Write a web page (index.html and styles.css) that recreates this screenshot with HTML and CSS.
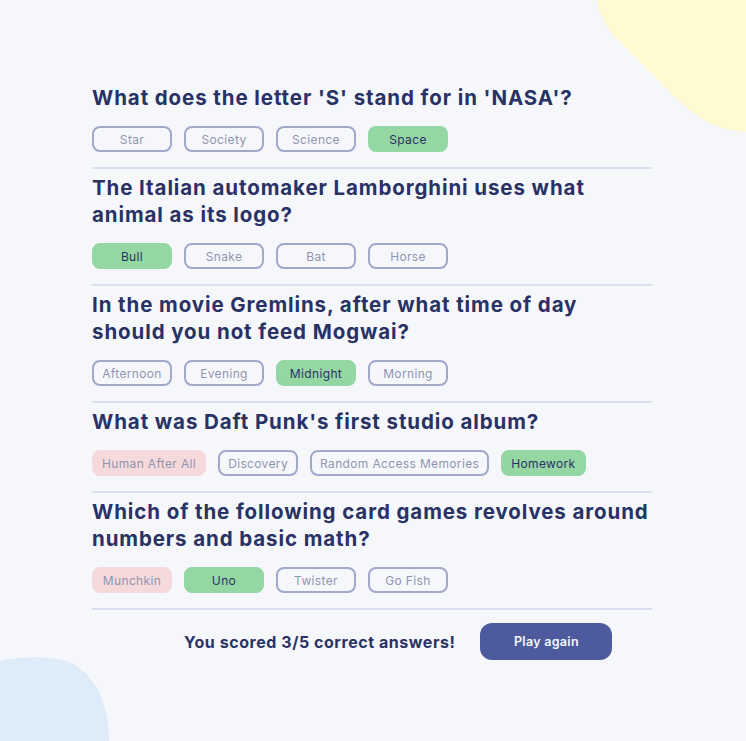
FILE: index.html
```html
<!DOCTYPE html>
<html lang="en">
<head>
<meta charset="utf-8">
<title>Quizzical</title>
<link rel="stylesheet" href="styles.css">
</head>
<body>
<svg class="blob blob-yellow" width="150" height="140" viewBox="596 0 150 140" aria-hidden="true">
  <path d="M597,0 C599,14 605,26 616,38 L664,86 C685,108 708,130 746,132 L746,0 Z" fill="#FFFAD1"/>
</svg>
<svg class="blob blob-blue" width="112" height="86" viewBox="0 655 112 86" aria-hidden="true">
  <path d="M0,661 C20,657 45,655 66,661 C92,670 109,700 109,741 L0,741 Z" fill="#DEEBF8"/>
</svg>
<main class="quiz">
  <section class="question">
    <h2 class="question-title">What does the letter 'S' stand for in 'NASA'?</h2>
    <div class="options">
      <span class="option">Star</span>
      <span class="option">Society</span>
      <span class="option">Science</span>
      <span class="option correct">Space</span>
    </div>
  </section>
  <section class="question">
    <h2 class="question-title">The Italian automaker Lamborghini uses what animal as its logo?</h2>
    <div class="options">
      <span class="option correct">Bull</span>
      <span class="option">Snake</span>
      <span class="option">Bat</span>
      <span class="option">Horse</span>
    </div>
  </section>
  <section class="question">
    <h2 class="question-title">In the movie Gremlins, after what time of day should you not feed Mogwai?</h2>
    <div class="options">
      <span class="option">Afternoon</span>
      <span class="option">Evening</span>
      <span class="option correct">Midnight</span>
      <span class="option">Morning</span>
    </div>
  </section>
  <section class="question">
    <h2 class="question-title">What was Daft Punk's first studio album?</h2>
    <div class="options">
      <span class="option wrong">Human After All</span>
      <span class="option">Discovery</span>
      <span class="option">Random Access Memories</span>
      <span class="option correct">Homework</span>
    </div>
  </section>
  <section class="question">
    <h2 class="question-title">Which of the following card games revolves around numbers and basic math?</h2>
    <div class="options">
      <span class="option wrong">Munchkin</span>
      <span class="option correct">Uno</span>
      <span class="option">Twister</span>
      <span class="option">Go Fish</span>
    </div>
  </section>
  <footer class="result">
    <p class="score">You scored 3/5 correct answers!</p>
    <button class="play-again" type="button">Play again</button>
  </footer>
</main>
</body>
</html>
```
FILE: styles.css
```css
* { box-sizing: border-box; }

html, body {
  margin: 0;
  padding: 0;
  height: 100%;
}

body {
  background: #F5F7FB;
  font-family: "Inter", "Liberation Sans", sans-serif;
  color: #293264;
  overflow: hidden;
  position: relative;
}

.blob {
  position: absolute;
  display: block;
}

.blob-yellow {
  top: 0;
  right: 0;
}

.blob-blue {
  left: 0;
  bottom: 0;
}

.quiz {
  position: relative;
  width: 560px;
  margin-left: 92px;
  padding-top: 84px;
}

.question {
  padding-top: 5px;
  padding-bottom: 15px;
  border-bottom: 2px solid #DBDEF0;
}

.question:first-child {
  padding-top: 0;
}

.question-title {
  margin: 0 0 15px;
  font-size: 20.5px;
  line-height: 27px;
  font-weight: 700;
  letter-spacing: 0.9px;
  color: #293264;
}

.options {
  display: flex;
  gap: 12px;
}

.option {
  min-width: 80px;
  height: 26px;
  padding: 0 8px;
  display: flex;
  align-items: center;
  justify-content: center;
  border: 2px solid #4D5B9E;
  border-radius: 8px;
  font-size: 12px;
  letter-spacing: 0.35px;
  color: #293264;
  opacity: 0.5;
}

.option.correct {
  opacity: 1;
  background: #94D7A2;
  border-color: #94D7A2;
}

.option.wrong {
  background: #F8BCBC;
  border-color: #F8BCBC;
}

.result {
  display: flex;
  align-items: center;
  margin-top: 13px;
  padding-left: 92px;
  gap: 25px;
}

.score {
  margin: 0;
  font-size: 16px;
  font-weight: 700;
  letter-spacing: 0.55px;
  color: #293264;
}

.play-again {
  width: 132px;
  height: 37px;
  border: none;
  border-radius: 12px;
  background: #4D5B9E;
  color: #F5F7FB;
  font-family: inherit;
  font-size: 12.5px;
  font-weight: 600;
  letter-spacing: 0.3px;
  cursor: pointer;
}
```
